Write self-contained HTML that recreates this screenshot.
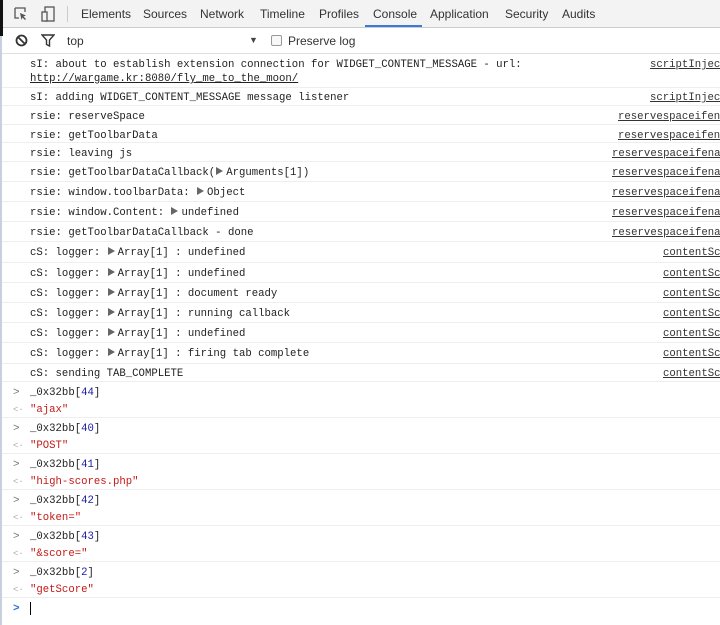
<!DOCTYPE html>
<html><head><meta charset="utf-8"><style>
*{margin:0;padding:0;box-sizing:border-box}
body{width:720px;height:625px;background:#fff;position:relative;overflow:hidden;font-family:"Liberation Sans",sans-serif}
.tb{position:absolute;left:0;top:0;width:720px;height:28px;background:#f3f3f3;border-bottom:1px solid #ccc}
.tab{position:absolute;top:7px;font-size:12px;color:#333}
.fb{position:absolute;left:0;top:28px;width:720px;height:26px;background:#fff;border-bottom:1px solid #e0e0e0}
.r{position:absolute;left:2px;width:718px;border-top:1px solid #eee;font-family:"Liberation Mono",monospace;font-size:10.65px;color:#222;white-space:pre}
.r span.t{position:absolute;left:28px;top:4px;line-height:14px}
.l{position:absolute;top:4px;line-height:14px;color:#333;text-decoration:underline}
.a{display:inline-block;width:0;height:0;border-left:7px solid #666;border-top:4px solid transparent;border-bottom:4px solid transparent;margin:0 3px 0 1px;vertical-align:0}
.n{color:#1a1aa6}.s{color:#c41a16}
.p{position:absolute;left:11px;top:4px;line-height:14px;color:#777;font-size:11px}
.o{position:absolute;left:11px;top:4px;line-height:14px;color:#aaa;font-size:9px}
</style></head><body>
<div style="position:absolute;left:0;top:0;width:3px;height:36px;background:#111;z-index:3"></div>
<div style="position:absolute;left:0;top:36px;width:2px;height:589px;background:#c7cfe0;z-index:3"></div>
<div class="tb">
<svg style="position:absolute;left:14px;top:7px" width="14" height="14" viewBox="0 0 14 14"><path d="M1 1h10v4M1 1v10h4" fill="none" stroke="#555" stroke-width="1.3"/><path d="M6 6l6 2.5-2.5 1 2.5 2.5-1 1-2.5-2.5-1 2.5z" fill="#555"/></svg>
<svg style="position:absolute;left:41px;top:6px" width="14" height="16" viewBox="0 0 14 16"><rect x="4" y="1" width="9" height="14" fill="none" stroke="#555" stroke-width="1.3"/><rect x="1" y="6" width="5" height="9" fill="#f3f3f3" stroke="#555" stroke-width="1.3"/></svg>
<div style="position:absolute;left:67px;top:6px;width:1px;height:16px;background:#ccc"></div>
<div class="tab" style="left:81px">Elements</div>
<div class="tab" style="left:143px">Sources</div>
<div class="tab" style="left:200px">Network</div>
<div class="tab" style="left:260px">Timeline</div>
<div class="tab" style="left:319px">Profiles</div>
<div class="tab" style="left:373px">Console</div>
<div style="position:absolute;left:365px;top:25px;width:57px;height:2px;background:#3879d9"></div>
<div class="tab" style="left:430px">Application</div>
<div class="tab" style="left:505px">Security</div>
<div class="tab" style="left:562px">Audits</div>
</div>
<div class="fb">
<svg style="position:absolute;left:15px;top:6px" width="13" height="13" viewBox="0 0 13 13"><circle cx="6.5" cy="6.5" r="5" fill="none" stroke="#333" stroke-width="1.8"/><path d="M3 3l7 7" stroke="#333" stroke-width="1.8"/></svg>
<svg style="position:absolute;left:41px;top:6px" width="14" height="13" viewBox="0 0 14 13"><path d="M1 1h12l-4.5 5v6l-3-1.5v-4.5z" fill="none" stroke="#333" stroke-width="1.4"/></svg>
<div style="position:absolute;left:67px;top:6px;font-size:12px;color:#333">top</div>
<div style="position:absolute;left:249px;top:7px;font-size:9px;color:#444">▼</div>
<div style="position:absolute;left:271px;top:7px;width:11px;height:11px;border:1px solid #999;border-radius:2px;background:#f8f8f8"></div>
<div style="position:absolute;left:288px;top:6px;font-size:12px;color:#333">Preserve log</div>
</div>

<div class="r" style="top:54px;height:33px;border-top:none"><span class="t">sI: about to establish extension connection for WIDGET_CONTENT_MESSAGE - url:
<u>http://wargame.kr:8080/fly_me_to_the_moon/</u></span><span class="l" style="left:648px">scriptInjec</span></div>
<div class="r" style="top:87px;height:18px"><span class="t" style="top:3px">sI: adding WIDGET_CONTENT_MESSAGE message listener</span><span class="l" style="left:648px;top:3px">scriptInjec</span></div>
<div class="r" style="top:105px;height:19px"><span class="t">rsie: reserveSpace</span><span class="l" style="left:616px">reservespaceifen</span></div>
<div class="r" style="top:124px;height:18px"><span class="t">rsie: getToolbarData</span><span class="l" style="left:616px">reservespaceifen</span></div>
<div class="r" style="top:142px;height:19px"><span class="t">rsie: leaving js</span><span class="l" style="left:610px">reservespaceifena</span></div>
<div class="r" style="top:161px;height:20px"><span class="t">rsie: getToolbarDataCallback(<span class="a"></span>Arguments[1])</span><span class="l" style="left:610px">reservespaceifena</span></div>
<div class="r" style="top:181px;height:20px"><span class="t">rsie: window.toolbarData: <span class="a"></span>Object</span><span class="l" style="left:610px">reservespaceifena</span></div>
<div class="r" style="top:201px;height:20px"><span class="t">rsie: window.Content: <span class="a"></span>undefined</span><span class="l" style="left:610px">reservespaceifena</span></div>
<div class="r" style="top:221px;height:20px"><span class="t">rsie: getToolbarDataCallback - done</span><span class="l" style="left:610px">reservespaceifena</span></div>
<div class="r" style="top:241px;height:21px"><span class="t">cS: logger: <span class="a"></span>Array[1] : undefined</span><span class="l" style="left:661px">contentSc</span></div>
<div class="r" style="top:262px;height:20px"><span class="t">cS: logger: <span class="a"></span>Array[1] : undefined</span><span class="l" style="left:661px">contentSc</span></div>
<div class="r" style="top:282px;height:20px"><span class="t">cS: logger: <span class="a"></span>Array[1] : document ready</span><span class="l" style="left:661px">contentSc</span></div>
<div class="r" style="top:302px;height:20px"><span class="t">cS: logger: <span class="a"></span>Array[1] : running callback</span><span class="l" style="left:661px">contentSc</span></div>
<div class="r" style="top:322px;height:20px"><span class="t">cS: logger: <span class="a"></span>Array[1] : undefined</span><span class="l" style="left:661px">contentSc</span></div>
<div class="r" style="top:342px;height:21px"><span class="t">cS: logger: <span class="a"></span>Array[1] : firing tab complete</span><span class="l" style="left:661px">contentSc</span></div>
<div class="r" style="top:363px;height:18px"><span class="t" style="top:3px">cS: sending TAB_COMPLETE</span><span class="l" style="left:661px;top:3px">contentSc</span></div>

<div class="r" style="top:381px;height:18px"><span class="p">&gt;</span><span class="t">_0x32bb[<span class="n">44</span>]</span></div>
<div class="r" style="top:399px;height:18px;border-top:none"><span class="o">&lt;·</span><span class="t s">"ajax"</span></div>
<div class="r" style="top:417px;height:18px"><span class="p">&gt;</span><span class="t">_0x32bb[<span class="n">40</span>]</span></div>
<div class="r" style="top:435px;height:18px;border-top:none"><span class="o">&lt;·</span><span class="t s">"POST"</span></div>
<div class="r" style="top:453px;height:18px"><span class="p">&gt;</span><span class="t">_0x32bb[<span class="n">41</span>]</span></div>
<div class="r" style="top:471px;height:18px;border-top:none"><span class="o">&lt;·</span><span class="t s">"high-scores.php"</span></div>
<div class="r" style="top:489px;height:18px"><span class="p">&gt;</span><span class="t">_0x32bb[<span class="n">42</span>]</span></div>
<div class="r" style="top:507px;height:18px;border-top:none"><span class="o">&lt;·</span><span class="t s">"token="</span></div>
<div class="r" style="top:525px;height:18px"><span class="p">&gt;</span><span class="t">_0x32bb[<span class="n">43</span>]</span></div>
<div class="r" style="top:543px;height:18px;border-top:none"><span class="o">&lt;·</span><span class="t s">"&amp;score="</span></div>
<div class="r" style="top:561px;height:18px"><span class="p">&gt;</span><span class="t">_0x32bb[<span class="n">2</span>]</span></div>
<div class="r" style="top:579px;height:18px;border-top:none"><span class="o">&lt;·</span><span class="t s">"getScore"</span></div>
<div class="r" style="top:597px;height:28px"><span class="p" style="color:#2a72d8;font-weight:bold">&gt;</span><span style="position:absolute;left:28px;top:4px;width:1px;height:13px;background:#000"></span></div>
</body></html>
